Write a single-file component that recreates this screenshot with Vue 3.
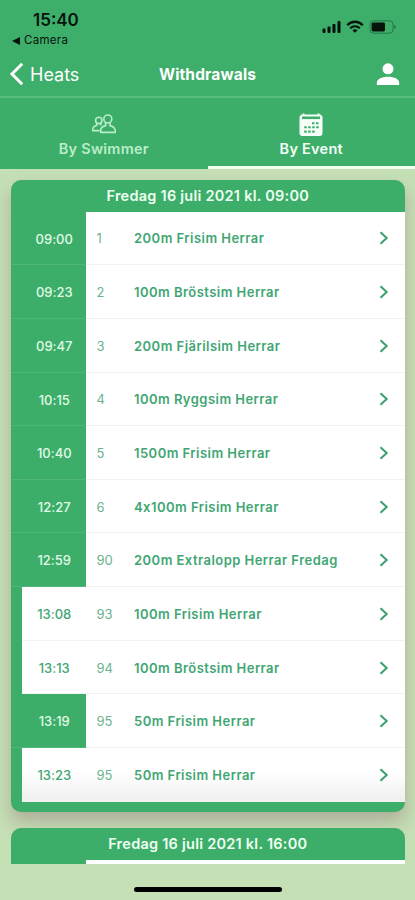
<script setup>
import { ref } from 'vue'

const activeTab = ref('event')

const sessions = ref([
  {
    title: 'Fredag 16 juli 2021 kl. 09:00',
    events: [
      { time: '09:00', number: 1, name: '200m Frisim Herrar', filled: true },
      { time: '09:23', number: 2, name: '100m Bröstsim Herrar', filled: true },
      { time: '09:47', number: 3, name: '200m Fjärilsim Herrar', filled: true },
      { time: '10:15', number: 4, name: '100m Ryggsim Herrar', filled: true },
      { time: '10:40', number: 5, name: '1500m Frisim Herrar', filled: true },
      { time: '12:27', number: 6, name: '4x100m Frisim Herrar', filled: true },
      { time: '12:59', number: 90, name: '200m Extralopp Herrar Fredag', filled: true },
      { time: '13:08', number: 93, name: '100m Frisim Herrar', filled: false },
      { time: '13:13', number: 94, name: '100m Bröstsim Herrar', filled: false },
      { time: '13:19', number: 95, name: '50m Frisim Herrar', filled: true },
      { time: '13:23', number: 95, name: '50m Frisim Herrar', filled: false }
    ]
  },
  {
    title: 'Fredag 16 juli 2021 kl. 16:00',
    events: []
  }
])
</script>

<template>
  <div class="screen">
    <header class="top">
      <div class="status">
        <div class="status-left">
          <div class="clock">15:40</div>
          <div class="back-app"><span class="triangle"></span>Camera</div>
        </div>
        <div class="status-icons">
          <svg width="19" height="14" viewBox="0 0 19 14">
            <rect x="0.5" y="8.5" width="3" height="4.5" rx="1" />
            <rect x="5.5" y="6.5" width="3" height="6.5" rx="1" />
            <rect x="10.5" y="4" width="3" height="9" rx="1" />
            <rect x="15.5" y="1" width="3" height="12" rx="1" />
          </svg>
          <svg width="18" height="14" viewBox="0 0 18 14" fill="none" stroke="#06130b">
            <path d="M1.2 5.2C5.6 0.6 12.4 0.6 16.8 5.2" stroke-width="2.3" />
            <path d="M4.2 8.3C7 5.6 11 5.6 13.8 8.3" stroke-width="2.2" />
            <path d="M9 12.8L6.4 10.3C7.8 8.9 10.2 8.9 11.6 10.3Z" fill="#06130b" stroke="none" />
          </svg>
          <svg width="28" height="14" viewBox="0 0 28 14">
            <rect x="1" y="0.8" width="23" height="12.4" rx="3.4" fill="none" stroke="#22784a" stroke-width="1" />
            <rect x="2.6" y="2.6" width="13.4" height="8.8" rx="1.4" />
            <path d="M25.2 4.6Q28.4 7 25.2 9.4Z" fill="#22784a" />
          </svg>
        </div>
      </div>
      <nav class="nav">
        <a class="back">
          <svg width="15" height="24" viewBox="0 0 15 24" fill="none" stroke="#fff" stroke-width="3">
            <path d="M13.2 1.8L3 12L13.2 22.2" />
          </svg>
          Heats
        </a>
        <h1>Withdrawals</h1>
        <svg class="user" width="24" height="23" viewBox="0 0 24 23" fill="#fff">
          <circle cx="12" cy="5.8" r="5.5" />
          <path d="M0.8 22V20C0.8 16 6 13.8 12 13.8S23.2 16 23.2 20V22Z" />
        </svg>
      </nav>
    </header>

    <div class="tabs">
      <div class="tab" :class="{ active: activeTab === 'swimmer' }" @click="activeTab = 'swimmer'">
        <svg width="26" height="24" viewBox="0 0 26 24" fill="none" stroke="currentColor" stroke-width="1.6">
          <circle cx="7.8" cy="7.4" r="3.2" />
          <circle cx="16.8" cy="6" r="4" />
          <path d="M5.8 10V12.4C3 13 1.2 15 1.8 17.6H8.6M9.8 10V12.4" />
          <path d="M14.6 9.6V12.6C11.2 13.4 9 15.8 9.8 19.4H24.2C25 15.8 22.6 13.4 19 12.6V9.6" />
        </svg>
        By Swimmer
      </div>
      <div class="tab" :class="{ active: activeTab === 'event' }" @click="activeTab = 'event'">
        <svg width="26" height="24" viewBox="0 0 26 24">
          <path
            d="M4.5 1.5V0.5H6.5V1.5H19.5V0.5H21.5V1.5Q24.5 1.8 24.5 4.8V20Q24.5 23 21.5 23H4.5Q1.5 23 1.5 20V4.8Q1.5 1.8 4.5 1.5Z"
            fill="currentColor"
          />
          <path d="M4 4.8H22" stroke="#3cae6a" stroke-width="2.6" />
          <path
            d="M14 10.2H21M6.2 14.3H21M6.2 18.6H17"
            stroke="#3cae6a"
            stroke-width="2.1"
            stroke-dasharray="2.5 1.5"
          />
        </svg>
        By Event
      </div>
    </div>

    <main class="list">
      <section v-for="session in sessions" :key="session.title" class="session">
        <h2>{{ session.title }}</h2>
        <div v-for="(item, index) in session.events" :key="index" class="event" :class="{ filled: item.filled }">
          <div class="time">{{ item.time }}</div>
          <div class="info">
            <span class="number">{{ item.number }}</span>
            <span class="name">{{ item.name }}</span>
            <svg width="10" height="14" viewBox="0 0 10 14" fill="none" stroke="#3a9f6d" stroke-width="2">
              <path d="M1.5 1.2L7.7 7L1.5 12.8" />
            </svg>
          </div>
        </div>
        <div v-if="!session.events.length" class="event filled">
          <div class="time"></div>
          <div class="info"></div>
        </div>
      </section>
    </main>

    <footer class="home">
      <div class="home-bar"></div>
    </footer>
  </div>
</template>

<style>
body {
  margin: 0;
  background: #c6e0b5;
}
</style>

<style scoped>
.screen {
  display: flex;
  flex-direction: column;
  width: 415px;
  height: 900px;
  overflow: hidden;
  background: #c6e0b5;
  font-family: Inter, 'Liberation Sans', sans-serif;
}

.top {
  box-sizing: border-box;
  height: 98px;
  background: #3eae6b;
  border-bottom: 2px solid #58bd80;
}

.status {
  display: flex;
  justify-content: space-between;
  height: 50px;
  color: #06130b;
}

.clock {
  padding: 10px 0 0 33px;
  font-size: 17px;
  line-height: 20px;
  font-weight: 600;
}

.back-app {
  display: flex;
  align-items: center;
  gap: 4px;
  padding-left: 12px;
  font-size: 11.5px;
  line-height: 21px;
  letter-spacing: 0.3px;
}

.triangle {
  border: 4px solid transparent;
  border-right: 8px solid #06130b;
  border-left: 0;
}

.status-icons {
  display: flex;
  gap: 5px;
  padding: 20px 18px 0 0;
  margin-right: 0;
  fill: #06130b;
}

.nav {
  display: grid;
  grid-template-columns: 1fr auto 1fr;
  align-items: center;
  height: 48px;
  color: #fff;
}

.back {
  display: flex;
  align-items: center;
  gap: 6px;
  padding-left: 9px;
  font-size: 18px;
}

.nav h1 {
  margin: 0;
  font-size: 15.5px;
  font-weight: 700;
  letter-spacing: 0.15px;
}

.user {
  justify-self: end;
  margin-right: 15px;
}

.tabs {
  display: flex;
  flex: none;
  height: 71px;
  background: #3cae6a;
}

.tab {
  box-sizing: border-box;
  display: flex;
  flex: 1;
  flex-direction: column;
  align-items: center;
  gap: 3px;
  padding-top: 15px;
  border-bottom: 3px solid transparent;
  color: #b9edc8;
  font-size: 14.5px;
  line-height: 18px;
  font-weight: 600;
  letter-spacing: 0.25px;
}

.tab.active {
  border-color: #f1fbf0;
  color: #f5fff7;
}

.list {
  flex: none;
  box-sizing: border-box;
  display: flex;
  flex-direction: column;
  gap: 16px;
  height: 694.5px;
  padding: 10.6px 10.5px 0 11px;
  overflow: hidden;
}

.session {
  flex: none;
  padding-bottom: 10px;
  border-radius: 10px;
  background: #3cae6a;
  box-shadow: 0 10px 18px rgba(150, 125, 130, 0.5);
}

.session:last-child {
  box-shadow: none;
}

.session h2 {
  margin: 0;
  height: 32px;
  color: #effff1;
  font-size: 14.5px;
  line-height: 31px;
  font-weight: 600;
  letter-spacing: 0.25px;
  text-align: center;
}

.event {
  display: flex;
  box-sizing: border-box;
  height: 53.65px;
  margin-left: 11px;
  background: #fff;
  color: #3fa673;
  font-size: 13px;
  font-variant-ligatures: no-contextual;
}

.event.filled {
  margin-left: 0;
  background: #fff;
}

.time {
  box-sizing: border-box;
  flex: none;
  width: 63.5px;
  padding-left: 1px;
  border-bottom: 1px solid #f1f5f3;
  line-height: 54px;
  font-weight: 500;
  text-align: center;
}

.filled .time {
  width: 74.5px;
  padding-left: 12px;
  border-color: #50b57b;
  background: #3cae6a;
  color: #e0fae6;
}

.info {
  box-sizing: border-box;
  display: flex;
  flex: 1;
  align-items: center;
  padding: 1px 16px 0 11px;
  border-bottom: 1px solid #eff2f1;
}

.number {
  width: 37.5px;
  color: #6ab390;
}

.name {
  flex: 1;
  font-weight: 600;
  letter-spacing: 0.46px;
}

.session .event:last-child:not(.filled) {
  background: linear-gradient(#fff 45%, #f0eeee);
}

.home {
  display: flex;
  justify-content: center;
  padding-top: 23px;
}

.home-bar {
  width: 148px;
  height: 5px;
  border-radius: 3px;
  background: #000;
}
</style>
